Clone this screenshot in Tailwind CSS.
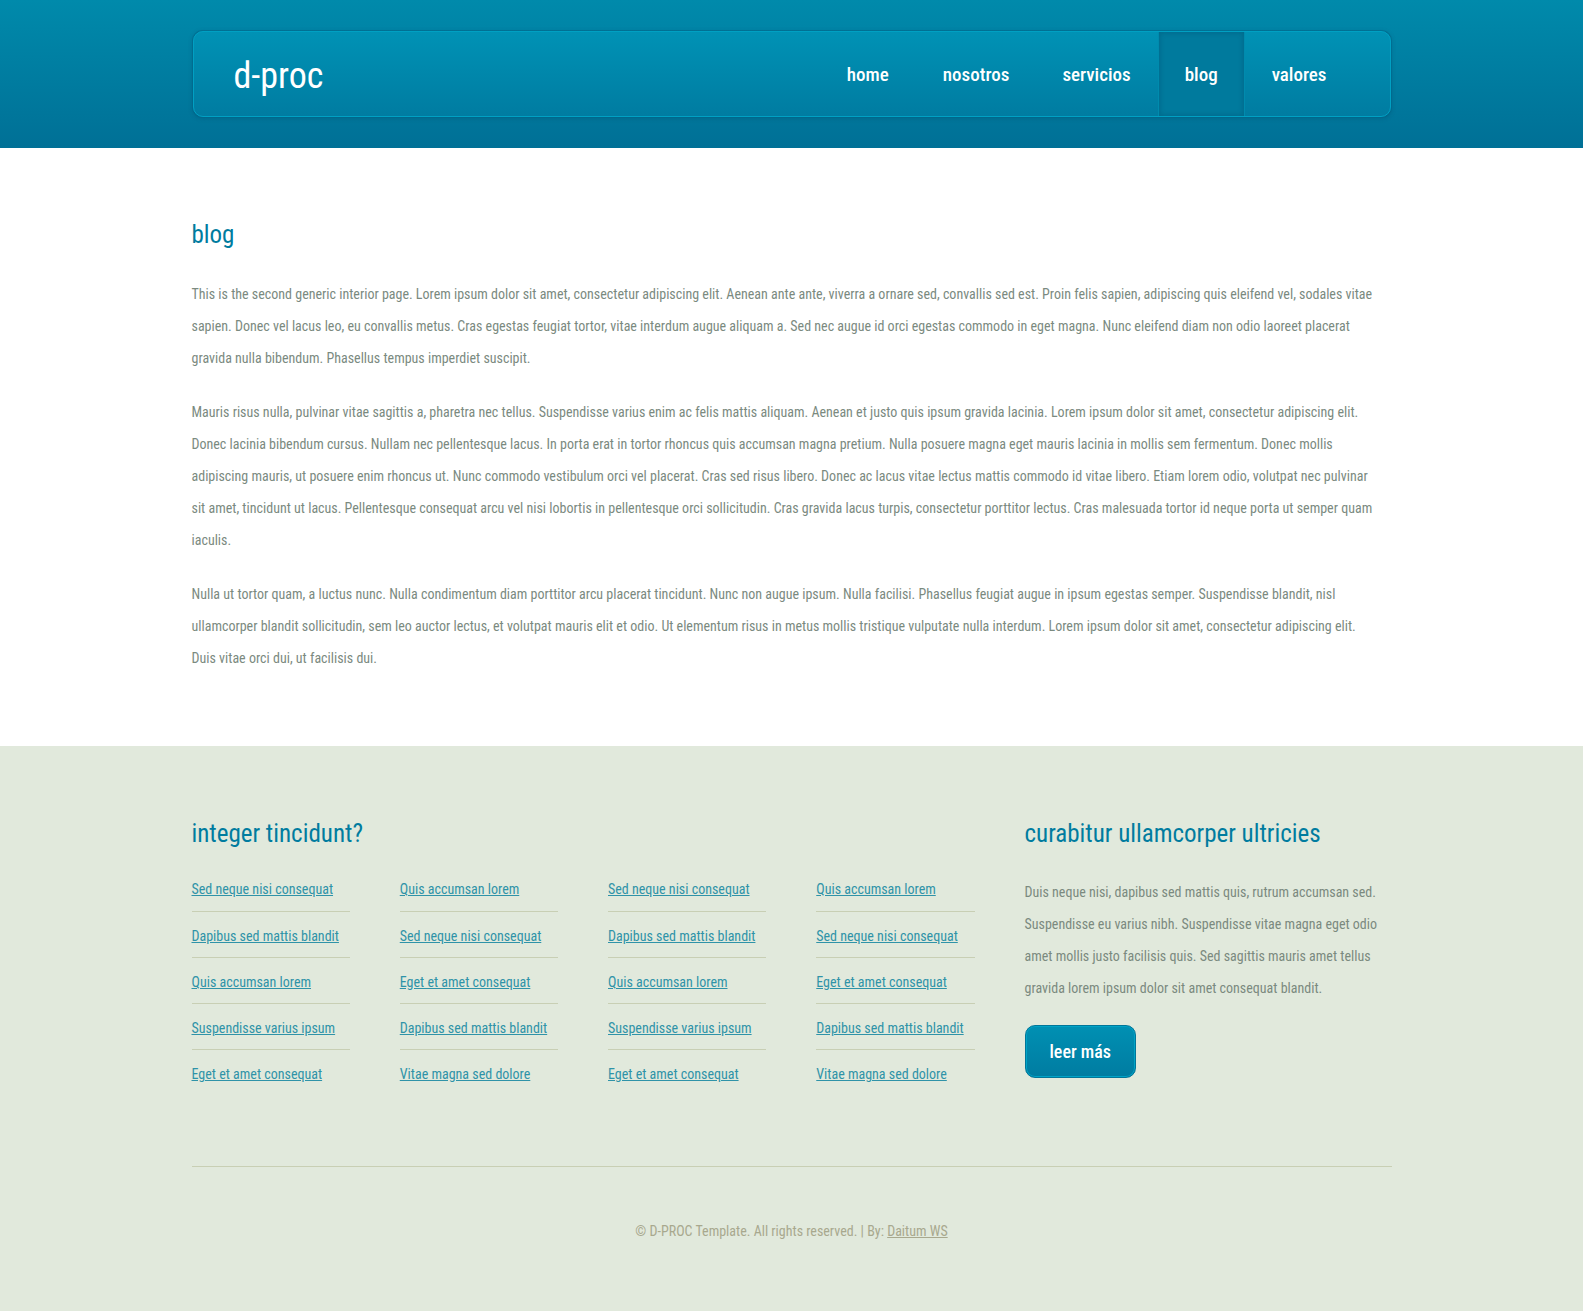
<!DOCTYPE html>
<html lang="es">
<head>
<meta charset="utf-8">
<meta name="viewport" content="width=device-width, initial-scale=1">
<title>d-proc</title>
<script src="https://cdn.jsdelivr.net/npm/@tailwindcss/browser@4"></script>
</head>
<body class="min-h-screen bg-[#e1e9dc] font-['Roboto_Condensed','Liberation_Sans',sans-serif] text-sm leading-8 text-[#7b8a7f]">

<header class="bg-linear-to-b from-[#008aab] to-[#007096] py-[31px]">
  <div class="mx-auto flex h-[86px] max-w-[1198px] items-stretch justify-between rounded-[10px] border border-[#00a0c3] bg-linear-to-b from-[#0092b5] to-[#007ca1] pr-[38px] pl-10 shadow-[0_0_0_1px_rgba(0,100,135,0.5),0_1px_4px_1px_rgba(0,60,90,0.2)]">
    <a href="#" class="flex items-center pt-1 text-4xl text-white">d-proc</a>
    <nav class="flex gap-[3px] text-[19px] font-medium text-white">
      <a href="#" class="flex items-center px-[26px] pt-0.5">home</a>
      <a href="#" class="flex items-center px-[25px] pt-0.5">nosotros</a>
      <a href="#" class="flex items-center px-[25px] pt-0.5">servicios</a>
      <a href="#" aria-current="page" class="flex items-center bg-[#007a9d] px-[26px] pt-0.5 shadow-[inset_0_0_5px_1px_rgba(0,70,100,0.3),1px_0_0_0_#008bae,-1px_0_0_0_#008bae]">blog</a>
      <a href="#" class="flex items-center px-[25px] pt-0.5">valores</a>
    </nav>
  </div>
</header>

<main class="bg-white pt-[69px] pb-[72px]">
  <div class="mx-auto max-w-[1200px]">
    <h2 class="mb-[25px] text-[25px] leading-9 text-[#007c9f]">blog</h2>
    <div class="flex flex-col gap-[22px]">
      <p>This is the second generic interior page. Lorem ipsum dolor sit amet, consectetur adipiscing elit. Aenean ante ante, viverra a ornare sed, convallis sed est. Proin felis sapien, adipiscing quis eleifend vel, sodales vitae <br class="hidden xl:inline">sapien. Donec vel lacus leo, eu convallis metus. Cras egestas feugiat tortor, vitae interdum augue aliquam a. Sed nec augue id orci egestas commodo in eget magna. Nunc eleifend diam non odio laoreet placerat <br class="hidden xl:inline">gravida nulla bibendum. Phasellus tempus imperdiet suscipit.</p>
      <p>Mauris risus nulla, pulvinar vitae sagittis a, pharetra nec tellus. Suspendisse varius enim ac felis mattis aliquam. Aenean et justo quis ipsum gravida lacinia. Lorem ipsum dolor sit amet, consectetur adipiscing elit. <br class="hidden xl:inline">Donec lacinia bibendum cursus. Nullam nec pellentesque lacus. In porta erat in tortor rhoncus quis accumsan magna pretium. Nulla posuere magna eget mauris lacinia in mollis sem fermentum. Donec mollis <br class="hidden xl:inline">adipiscing mauris, ut posuere enim rhoncus ut. Nunc commodo vestibulum orci vel placerat. Cras sed risus libero. Donec ac lacus vitae lectus mattis commodo id vitae libero. Etiam lorem odio, volutpat nec pulvinar <br class="hidden xl:inline">sit amet, tincidunt ut lacus. Pellentesque consequat arcu vel nisi lobortis in pellentesque orci sollicitudin. Cras gravida lacus turpis, consectetur porttitor lectus. Cras malesuada tortor id neque porta ut semper quam <br class="hidden xl:inline">iaculis.</p>
      <p>Nulla ut tortor quam, a luctus nunc. Nulla condimentum diam porttitor arcu placerat tincidunt. Nunc non augue ipsum. Nulla facilisi. Phasellus feugiat augue in ipsum egestas semper. Suspendisse blandit, nisl <br class="hidden xl:inline">ullamcorper blandit sollicitudin, sem leo auctor lectus, et volutpat mauris elit et odio. Ut elementum risus in metus mollis tristique vulputate nulla interdum. Lorem ipsum dolor sit amet, consectetur adipiscing elit. <br class="hidden xl:inline">Duis vitae orci dui, ut facilisis dui.</p>
    </div>
  </div>
</main>

<footer class="mx-auto max-w-[1200px] pt-[70px]">
  <div class="flex gap-[50px] pb-[76px]">
    <section class="flex-1">
      <h2 class="mb-[21px] text-[25px] leading-9 text-[#007c9f]">integer tincidunt?</h2>
      <div class="grid grid-cols-4 gap-[50px] text-[#2f93a8] underline">
        <ul class="divide-y divide-[#c8cfb4] whitespace-nowrap">
          <li class="pb-[6px]"><a href="#">Sed neque nisi consequat</a></li>
          <li class="pt-2 pb-[5px]"><a href="#">Dapibus sed mattis blandit</a></li>
          <li class="pt-2 pb-[5px]"><a href="#">Quis accumsan lorem</a></li>
          <li class="pt-2 pb-[5px]"><a href="#">Suspendisse varius ipsum</a></li>
          <li class="pt-2"><a href="#">Eget et amet consequat</a></li>
        </ul>
        <ul class="divide-y divide-[#c8cfb4] whitespace-nowrap">
          <li class="pb-[6px]"><a href="#">Quis accumsan lorem</a></li>
          <li class="pt-2 pb-[5px]"><a href="#">Sed neque nisi consequat</a></li>
          <li class="pt-2 pb-[5px]"><a href="#">Eget et amet consequat</a></li>
          <li class="pt-2 pb-[5px]"><a href="#">Dapibus sed mattis blandit</a></li>
          <li class="pt-2"><a href="#">Vitae magna sed dolore</a></li>
        </ul>
        <ul class="divide-y divide-[#c8cfb4] whitespace-nowrap">
          <li class="pb-[6px]"><a href="#">Sed neque nisi consequat</a></li>
          <li class="pt-2 pb-[5px]"><a href="#">Dapibus sed mattis blandit</a></li>
          <li class="pt-2 pb-[5px]"><a href="#">Quis accumsan lorem</a></li>
          <li class="pt-2 pb-[5px]"><a href="#">Suspendisse varius ipsum</a></li>
          <li class="pt-2"><a href="#">Eget et amet consequat</a></li>
        </ul>
        <ul class="divide-y divide-[#c8cfb4] whitespace-nowrap">
          <li class="pb-[6px]"><a href="#">Quis accumsan lorem</a></li>
          <li class="pt-2 pb-[5px]"><a href="#">Sed neque nisi consequat</a></li>
          <li class="pt-2 pb-[5px]"><a href="#">Eget et amet consequat</a></li>
          <li class="pt-2 pb-[5px]"><a href="#">Dapibus sed mattis blandit</a></li>
          <li class="pt-2"><a href="#">Vitae magna sed dolore</a></li>
        </ul>
      </div>
    </section>
    <section class="w-[367px]">
      <h2 class="mb-6 text-[25px] leading-9 text-[#007c9f]">curabitur ullamcorper ultricies</h2>
      <p class="mb-[21px]">Duis neque nisi, dapibus sed mattis quis, rutrum accumsan sed. <br class="hidden xl:inline">Suspendisse eu varius nibh. Suspendisse vitae magna eget odio <br class="hidden xl:inline">amet mollis justo facilisis quis. Sed sagittis mauris amet tellus <br class="hidden xl:inline">gravida lorem ipsum dolor sit amet consequat blandit.</p>
      <button type="button" class="block h-[53px] rounded-[10px] border border-[#007699] bg-linear-to-b from-[#0090b3] to-[#007ca1] px-6 text-lg font-medium text-white shadow-[inset_0_0_0_1px_#00a3c6]">leer más</button>
    </section>
  </div>
  <p class="border-t border-[#c8cfb4] pt-12 pb-16 text-center text-[#a8a88e]">© D-PROC Template. All rights reserved. | By: <a href="#" class="underline">Daitum WS</a></p>
</footer>

</body>
</html>
